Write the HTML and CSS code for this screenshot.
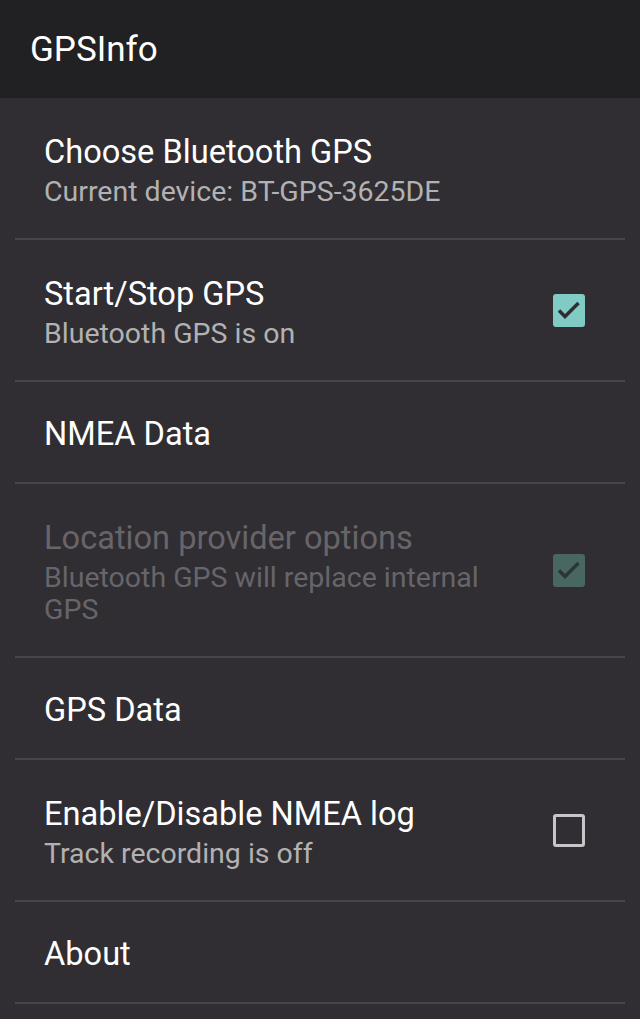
FILE: index.html
```
<!DOCTYPE html>
<html lang="en">
<head>
    <meta charset="UTF-8">
    <meta name="viewport" content="width=device-width, initial-scale=1.0">
    <title>GPSInfo</title>
    <link rel="stylesheet" href="styles.css">
</head>
<body>
    <div class="app-bar">GPSInfo</div>
    <ul class="pref-list">
        <li class="pref-item">
            <div class="pref-text">
                <div class="pref-title">Choose Bluetooth GPS</div>
                <div class="pref-summary">Current device: BT-GPS-3625DE</div>
            </div>
        </li>
        <li class="pref-item">
            <div class="pref-text">
                <div class="pref-title">Start/Stop GPS</div>
                <div class="pref-summary">Bluetooth GPS is on</div>
            </div>
            <span class="check-box checked">
                <svg viewBox="0 0 32 32" width="32" height="32"><path d="M6 16.5l6 6 13.5-13.5" /></svg>
            </span>
        </li>
        <li class="pref-item one-line">
            <div class="pref-text">
                <div class="pref-title">NMEA Data</div>
            </div>
        </li>
        <li class="pref-item disabled">
            <div class="pref-text">
                <div class="pref-title">Location provider options</div>
                <div class="pref-summary">Bluetooth GPS will replace internal GPS</div>
            </div>
            <span class="check-box checked">
                <svg viewBox="0 0 32 32" width="32" height="32"><path d="M6 16.5l6 6 13.5-13.5" /></svg>
            </span>
        </li>
        <li class="pref-item one-line">
            <div class="pref-text">
                <div class="pref-title">GPS Data</div>
            </div>
        </li>
        <li class="pref-item">
            <div class="pref-text">
                <div class="pref-title">Enable/Disable NMEA log</div>
                <div class="pref-summary">Track recording is off</div>
            </div>
            <span class="check-box"></span>
        </li>
        <li class="pref-item one-line">
            <div class="pref-text">
                <div class="pref-title">About</div>
            </div>
        </li>
    </ul>
</body>
</html>
```
FILE: styles.css
```
body {
    margin: 0;
    padding: 0;
    background-color: #302e32;
    font-family: Roboto, "Noto Sans", sans-serif;
    color: #ffffff;
    height: 1019px;
    overflow: hidden;
}
.app-bar {
    height: 98px;
    background-color: #212023;
    display: flex;
    align-items: center;
    padding-left: 30px;
    font-size: 35px;
    box-sizing: border-box;
}
.pref-list {
    list-style: none;
    margin: 0;
    padding: 0 15px;
}
.pref-item {
    display: flex;
    align-items: center;
    min-height: 102px;
    padding: 26px 40px 26px 29px;
    box-sizing: border-box;
    border-bottom: 2px solid #48464b;
    gap: 30px;
}
.pref-item.one-line {
    padding-top: 28px;
    padding-bottom: 24px;
}
.pref-text {
    flex: 1;
    padding: 4px 0;
}
.one-line .pref-text {
    padding: 0;
}
.pref-title {
    font-size: 32.6px;
    line-height: 48px;
}
.pref-summary {
    font-size: 28.5px;
    line-height: 32px;
    color: #b2b1b3;
}
.disabled .pref-title,
.disabled .pref-summary {
    color: #67656a;
}
.check-box {
    width: 32px;
    height: 33px;
    box-sizing: border-box;
    border: 3px solid #c6c5c7;
    border-radius: 3px;
    flex-shrink: 0;
    display: flex;
    align-items: center;
    justify-content: center;
}
.check-box.checked {
    background-color: #80cbc4;
    border: none;
}
.check-box svg path {
    fill: none;
    stroke: #2f2d31;
    stroke-width: 3.5;
}
.disabled .check-box.checked {
    background-color: #486761;
}
.disabled .check-box svg path {
    stroke: #2c3534;
}
```
